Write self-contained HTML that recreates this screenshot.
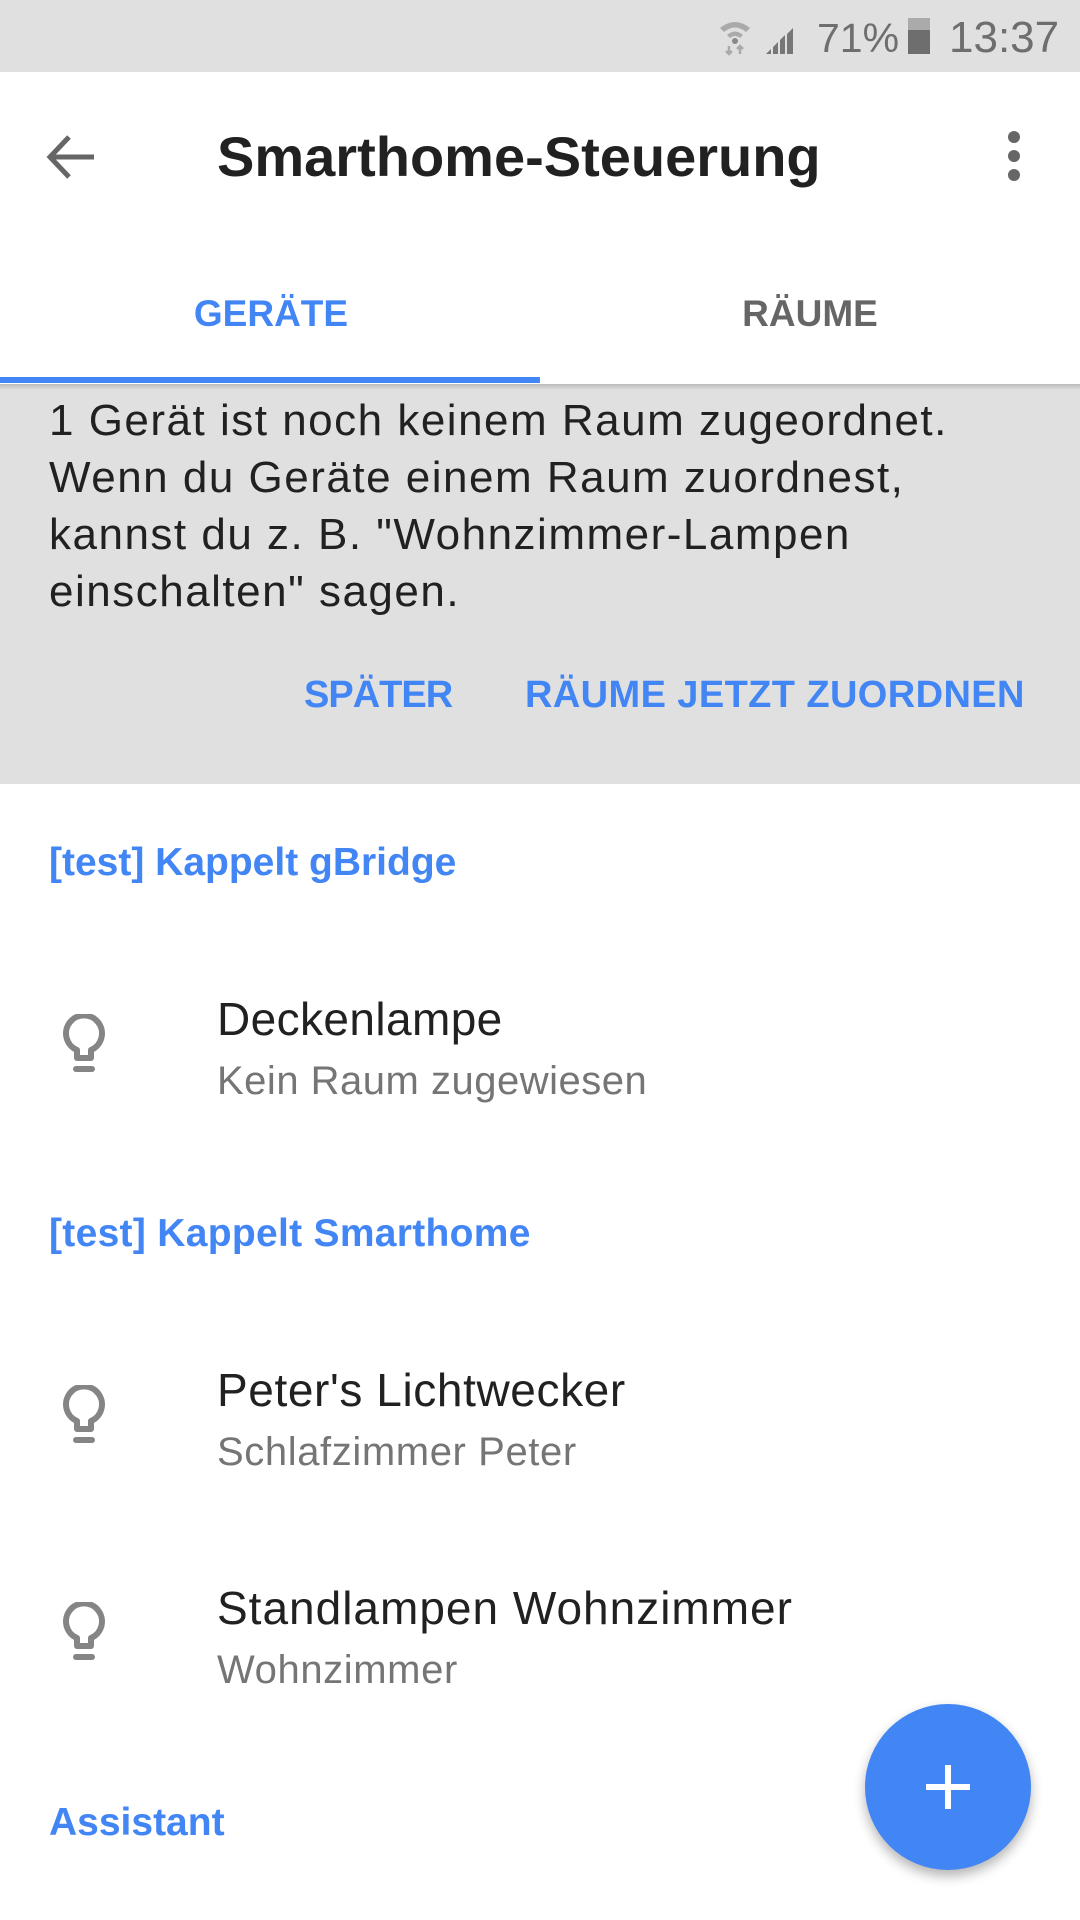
<!DOCTYPE html>
<html><head><meta charset="utf-8"><style>
*{margin:0;padding:0;box-sizing:border-box}
body{width:1080px;height:1920px;background:#fff;position:relative;overflow:hidden;font-family:"Liberation Sans",sans-serif}
.a{position:absolute;white-space:nowrap}
.c{height:60px;line-height:60px}
.blue{color:#4285f4;font-weight:bold}
</style></head><body>
<div class="a" style="left:0;top:0;width:1080px;height:72px;background:#e0e0e0"></div>
<svg class="a" style="left:718px;top:18px" width="34" height="38" viewBox="0 0 34 38"><path d="M2 10 Q17 -2 32 10 L28 14 Q17 5 6 14Z" fill="#aaa"/><path d="M9 17 Q17 10 25 17 L22 20 Q17 16 12 20Z" fill="#aaa"/><circle cx="17" cy="23" r="3" fill="#888"/><path d="M11 28v8M8 33l3 3 3-3M22 36v-8M19 31l3-3 3 3" stroke="#aaa" stroke-width="2.5" fill="none"/></svg>
<svg class="a" style="left:764px;top:18px" width="38" height="38" viewBox="0 0 38 38"><path d="M2 36h5v-5zM9 36h5v-12l-5 5zM16 36h5v-19l-5 5zM23 36h6v-26l-6 6z" fill="#777"/></svg>
<div class="a" style="left:817px;top:13px;font-size:41px;line-height:50px;color:#6e6e6e">71%</div>
<div class="a" style="left:908px;top:18px;width:22px;height:36px;background:#6e6e6e"></div>
<div class="a" style="left:908px;top:18px;width:22px;height:12px;background:#aaa"></div>
<div class="a" style="left:949px;top:13px;font-size:44px;line-height:50px;color:#6e6e6e">13:37</div>

<svg class="a" style="left:46px;top:134px" width="52" height="46" viewBox="0 0 52 46"><path d="M4 23H48M23 3L4 23 23 43" stroke="#666" stroke-width="5" fill="none"/></svg>
<div class="a" style="left:217px;top:125px;font-size:56px;line-height:64px;color:#212121;font-weight:bold;letter-spacing:0px">Smarthome-Steuerung</div>
<div class="a" style="left:1008px;top:131px;width:12px;height:12px;border-radius:6px;background:#666"></div>
<div class="a" style="left:1008px;top:150px;width:12px;height:12px;border-radius:6px;background:#666"></div>
<div class="a" style="left:1008px;top:169px;width:12px;height:12px;border-radius:6px;background:#666"></div>

<div class="a blue" style="left:0;width:542px;text-align:center;top:291px;font-size:37px;line-height:46px">GERÄTE</div>
<div class="a" style="left:540px;width:540px;text-align:center;top:291px;font-size:37px;line-height:46px;color:#666;font-weight:bold">RÄUME</div>

<div class="a" style="left:0;top:384px;width:1080px;height:400px;background:#e0e0e0"></div>
<div class="a" style="left:0;top:384px;width:1080px;height:6px;background:linear-gradient(#bbb,#e0e0e0)"></div>
<div class="a" style="left:0;top:377px;width:540px;height:6px;background:#4285f4"></div>
<div class="a" style="left:49px;top:392px;font-size:44px;line-height:57px;color:#212121;letter-spacing:1.5px">1 Gerät ist noch keinem Raum zugeordnet.<br>Wenn du Geräte einem Raum zuordnest,<br>kannst du z. B. "Wohnzimmer-Lampen<br>einschalten" sagen.</div>
<div class="a blue c" style="left:304px;top:665px;font-size:38px;letter-spacing:-1px">SPÄTER</div>
<div class="a blue c" style="left:525px;top:665px;font-size:38px;letter-spacing:0.4px">RÄUME JETZT ZUORDNEN</div>

<div class="a blue c" style="left:49px;top:833px;font-size:39px">[test] Kappelt gBridge</div>
<div class="a blue c" style="left:49px;top:1204px;font-size:39px;letter-spacing:0.3px">[test] Kappelt Smarthome</div>
<div class="a blue c" style="left:49px;top:1793px;font-size:39px">Assistant</div>

<div class="a c" style="left:217px;top:989px;font-size:46px;color:#212121;letter-spacing:0.4px">Deckenlampe</div>
<div class="a c" style="left:217px;top:1051px;font-size:40px;color:#757575;letter-spacing:0.5px">Kein Raum zugewiesen</div>
<div class="a c" style="left:217px;top:1360px;font-size:46px;color:#212121;letter-spacing:0.6px">Peter's Lichtwecker</div>
<div class="a c" style="left:217px;top:1422px;font-size:40px;color:#757575;letter-spacing:0.6px">Schlafzimmer Peter</div>
<div class="a c" style="left:217px;top:1578px;font-size:46px;color:#212121;letter-spacing:1px">Standlampen Wohnzimmer</div>
<div class="a c" style="left:217px;top:1640px;font-size:40px;color:#757575;letter-spacing:0.6px">Wohnzimmer</div>

<svg class="a" style="left:60px;top:1014px" width="48" height="64" viewBox="0 0 48 64"><path d="M17 44V36A18 18 0 1 1 31 36V44Z" stroke="#858585" stroke-width="6" fill="none" stroke-linejoin="round"/><path d="M16 55H32" stroke="#858585" stroke-width="6" stroke-linecap="round"/></svg>
<svg class="a" style="left:60px;top:1385px" width="48" height="64" viewBox="0 0 48 64"><path d="M17 44V36A18 18 0 1 1 31 36V44Z" stroke="#858585" stroke-width="6" fill="none" stroke-linejoin="round"/><path d="M16 55H32" stroke="#858585" stroke-width="6" stroke-linecap="round"/></svg>
<svg class="a" style="left:60px;top:1602px" width="48" height="64" viewBox="0 0 48 64"><path d="M17 44V36A18 18 0 1 1 31 36V44Z" stroke="#858585" stroke-width="6" fill="none" stroke-linejoin="round"/><path d="M16 55H32" stroke="#858585" stroke-width="6" stroke-linecap="round"/></svg>

<div class="a" style="left:865px;top:1704px;width:166px;height:166px;border-radius:50%;background:#4285f4;box-shadow:0 6px 12px rgba(0,0,0,0.3)"></div>
<div class="a" style="left:926px;top:1784px;width:44px;height:6px;background:#fff"></div>
<div class="a" style="left:945px;top:1765px;width:6px;height:44px;background:#fff"></div>
</body></html>
